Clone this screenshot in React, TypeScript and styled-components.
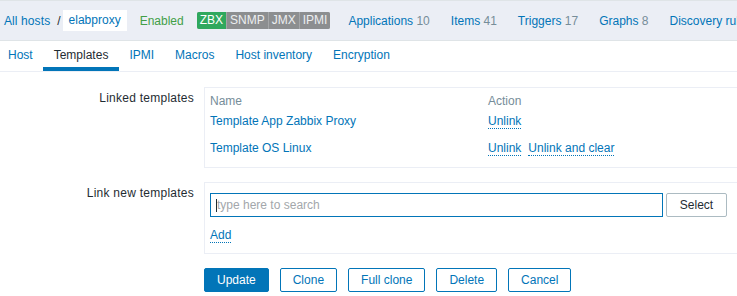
import React from 'react';
import styled, { createGlobalStyle } from 'styled-components';

const GlobalStyle = createGlobalStyle`
  html, body {
    margin: 0;
    padding: 0;
    overflow: hidden;
    background: #ffffff;
  }
  body {
    font-family: 'Liberation Sans', Arial, sans-serif;
    font-size: 12px;
    line-height: 14px;
    color: #1f2c33;
  }
`;

const navItems = [
  { label: 'Applications', count: 10 },
  { label: 'Items', count: 41 },
  { label: 'Triggers', count: 17 },
  { label: 'Graphs', count: 8 },
  { label: 'Discovery rules', count: 2 },
];

const tabs = ['Host', 'Templates', 'IPMI', 'Macros', 'Host inventory', 'Encryption'];

const linked = [
  { name: 'Template App Zabbix Proxy', clear: false },
  { name: 'Template OS Linux', clear: true },
];

const App: React.FC = () => {
  return (
    <>
      <GlobalStyle />
      <Header>
        <Crumb>All hosts</Crumb>
        <CrumbSep>/</CrumbSep>
        <CurrentHost>elabproxy</CurrentHost>
        <StatusText>Enabled</StatusText>
        <StatusGroup>
          <StatusTag $on>ZBX</StatusTag>
          <StatusTag>SNMP</StatusTag>
          <StatusTag>JMX</StatusTag>
          <StatusTag>IPMI</StatusTag>
        </StatusGroup>
        <NavList>
          {navItems.map((item) => (
            <NavItem key={item.label}>
              {item.label} <Count>{item.count}</Count>
            </NavItem>
          ))}
        </NavList>
      </Header>

      <TabBar>
        {tabs.map((t) => (
          <Tab key={t} $active={t === 'Templates'}>
            {t}
          </Tab>
        ))}
      </TabBar>

      <Form>
        <Label>Linked templates</Label>
        <Box $pad="5px 5px 5px 5px">
          <TemplateTable>
            <HeadCell>Name</HeadCell>
            <HeadCell>Action</HeadCell>
            {linked.map((row) => (
              <React.Fragment key={row.name}>
                <Cell>
                  <TextLink>{row.name}</TextLink>
                </Cell>
                <Cell>
                  <Actions>
                    <ActionLink>Unlink</ActionLink>
                    {row.clear && <ActionLink>Unlink and clear</ActionLink>}
                  </Actions>
                </Cell>
              </React.Fragment>
            ))}
          </TemplateTable>
        </Box>

        <Label>Link new templates</Label>
        <Box $pad="10px 5px 11px 5px">
          <SearchRow>
            <SearchWrap>
              <SearchInput placeholder="type here to search" readOnly />
              <Caret />
            </SearchWrap>
            <SelectButton type="button">Select</SelectButton>
          </SearchRow>
          <AddRow>
            <ActionLink>Add</ActionLink>
          </AddRow>
        </Box>

        <span />
        <ButtonRow>
          <Button type="button" $primary>Update</Button>
          <Button type="button">Clone</Button>
          <Button type="button">Full clone</Button>
          <Button type="button">Delete</Button>
          <Button type="button">Cancel</Button>
        </ButtonRow>
      </Form>
    </>
  );
};

export default App;

const Header = styled.div`
  display: flex;
  align-items: center;
  height: 39px;
  padding-left: 4px;
  background: #ebeef5;
  border-top: 1px solid #dfe4e7;
  border-bottom: 1px solid #dfe4e7;
  white-space: nowrap;
  overflow: hidden;

  & > * {
    flex-shrink: 0;
  }
`;

const Crumb = styled.a`
  color: #0275b8;
  letter-spacing: 0.1px;
`;

const CrumbSep = styled.span`
  margin: 0 2px 0 7px;
  color: #1f2c33;
`;

const CurrentHost = styled.span`
  display: inline-block;
  height: 21px;
  line-height: 21px;
  padding: 0 6px;
  background: #ffffff;
  color: #0275b8;
`;

const StatusText = styled.span`
  margin-left: 13px;
  color: #429e47;
`;

const StatusGroup = styled.div`
  display: flex;
  gap: 1px;
  margin-left: 13px;
  border-radius: 2px;
  overflow: hidden;
  background: #a4a6a8;
`;

const StatusTag = styled.span<{ $on?: boolean }>`
  height: 17px;
  line-height: 17px;
  padding: 0 3px;
  background: ${({ $on }) => ($on ? '#2fa85e' : '#8c8e90')};
  color: ${({ $on }) => ($on ? '#ffffff' : '#eceef0')};
`;

const NavList = styled.div`
  display: flex;
  gap: 21px;
  margin-left: 18px;

  & > * {
    flex-shrink: 0;
  }
`;

const NavItem = styled.a`
  color: #0275b8;
`;

const Count = styled.span`
  color: #768d99;
`;

const TabBar = styled.div`
  display: flex;
  height: 30px;
  margin-left: -2.5px;
  border-bottom: 1px solid #ebeef5;
`;

const Tab = styled.a<{ $active?: boolean }>`
  display: flex;
  align-items: center;
  padding: 1px 10.5px 0;
  color: ${({ $active }) => ($active ? '#1f2c33' : '#0275b8')};
  border-bottom: 4px solid ${({ $active }) => ($active ? '#0275b8' : 'transparent')};
`;

const Form = styled.div`
  display: grid;
  grid-template-columns: 194px 560px;
  column-gap: 10px;
  row-gap: 14px;
  padding-top: 15px;
`;

const Label = styled.div`
  padding-top: 4px;
  text-align: right;
  white-space: nowrap;
  letter-spacing: 0.25px;
`;

const Box = styled.div<{ $pad: string }>`
  padding: ${({ $pad }) => $pad};
  border: 1px solid #ebeef5;
`;

const TemplateTable = styled.div`
  display: grid;
  grid-template-columns: 278px 1fr;
`;

const HeadCell = styled.div`
  padding-top: 1px;
  color: #768d99;
`;

const Cell = styled.div`
  padding: 6px 0;
  white-space: nowrap;
`;

const TextLink = styled.a`
  color: #0275b8;
`;

const Actions = styled.div`
  display: flex;
  gap: 7px;
`;

const ActionLink = styled.a`
  color: #0275b8;
  border-bottom: 1px dotted #0275b8;
`;

const SearchRow = styled.div`
  display: flex;
  gap: 3px;
`;

const SearchWrap = styled.div`
  position: relative;
  width: 453px;
  height: 24px;
`;

const SearchInput = styled.input`
  box-sizing: border-box;
  width: 100%;
  height: 100%;
  margin: 0;
  padding: 0 6px;
  border: 1px solid #0275b8;
  border-radius: 0;
  outline: none;
  font: inherit;
  color: #1f2c33;

  &::placeholder {
    color: #a3a7ab;
  }
`;

const Caret = styled.span`
  position: absolute;
  left: 6px;
  top: 6px;
  width: 1px;
  height: 13px;
  background: #1f2c33;
`;

const SelectButton = styled.button`
  box-sizing: border-box;
  width: 61px;
  height: 24px;
  margin: 0;
  padding: 0;
  border: 1px solid #acbbc2;
  border-radius: 2px;
  background: #ffffff;
  font: inherit;
  color: #1f2c33;
`;

const AddRow = styled.div`
  margin-top: 11px;
`;

const ButtonRow = styled.div`
  display: flex;
  gap: 11px;
`;

const Button = styled.button<{ $primary?: boolean }>`
  box-sizing: border-box;
  height: 24px;
  margin: 0;
  padding: 0 12px;
  border: 1px solid #0275b8;
  border-radius: 2px;
  background: ${({ $primary }) => ($primary ? '#0275b8' : '#ffffff')};
  color: ${({ $primary }) => ($primary ? '#ffffff' : '#0275b8')};
  font: inherit;
`;
